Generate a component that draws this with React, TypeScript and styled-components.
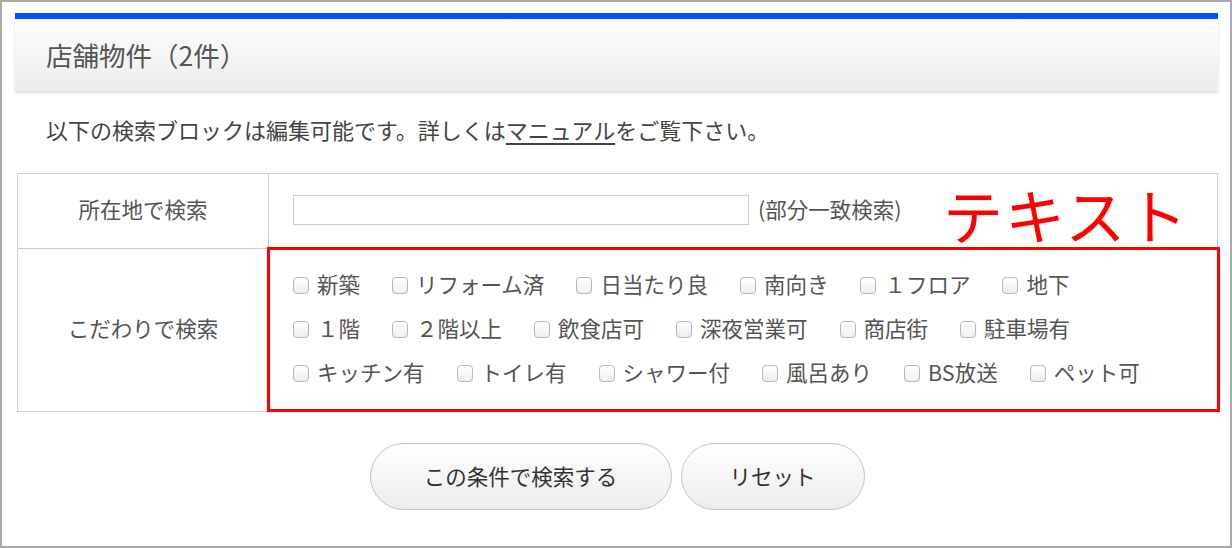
import React from "react";
import styled, { createGlobalStyle } from "styled-components";

const GlobalStyle = createGlobalStyle`
  * { box-sizing: border-box; }
  html, body { margin: 0; padding: 0; background: #fff; }
  body { font-family: "Noto Sans CJK JP", "Noto Sans", sans-serif; }
`;

const Frame = styled.div`
  width: 1232px;
  height: 548px;
  border: 2px solid #a9a9a9;
  padding: 11px 12px 0 13px;
  background: #fff;
  color: #555;
  overflow: hidden;
`;

const Header = styled.div`
  height: 78px;
  border-top: 6px solid #0052ff;
  background: linear-gradient(#fefefe, #ececec);
  box-shadow: 0 2px 3px rgba(0, 0, 0, 0.14);
  display: flex;
  align-items: center;
  padding-left: 31px;
  padding-bottom: 2px;
  font-size: 26.5px;
  color: #555;
`;

const Description = styled.p`
  margin: 23px 0 0;
  padding-left: 31px;
  font-size: 22px;
  line-height: 30px;
  color: #444;

  a {
    color: #444;
    text-decoration: underline;
    text-underline-offset: 4px;
  }
`;

const Table = styled.table`
  margin: 29px 0 0 2px;
  width: 1201px;
  border-collapse: collapse;
  font-size: 21.5px;
  color: #555;
`;

const Label = styled.th`
  width: 251px;
  border: 1px solid #cfcfcf;
  font-weight: normal;
  text-align: center;
  padding: 0 0 5px;
`;

const Cell = styled.td<{ $h: number }>`
  position: relative;
  height: ${(p) => p.$h}px;
  border: 1px solid #cfcfcf;
  padding: 0 0 0 24px;
  vertical-align: middle;
`;

const InputRow = styled.div`
  display: flex;
  align-items: center;
  padding-bottom: 3px;
`;

const TextInput = styled.input`
  width: 456px;
  height: 30px;
  border: 1px solid #ccc;
  margin: 0 9px 0 0;
  padding: 0 6px;
  font: inherit;
  font-size: 16px;
  outline: none;
`;

const Note = styled.span`
  font-size: 21.5px;
  color: #555;
  position: relative;
  top: -1px;
`;

const Annotation = styled.span`
  position: absolute;
  left: 674px;
  top: 10px;
  font-size: 60px;
  line-height: 1;
  color: #ff0000;
  letter-spacing: 2px;
`;

const Highlight = styled.div`
  position: absolute;
  top: -2px;
  left: -2px;
  right: -3px;
  bottom: -1px;
  border: 3.5px solid #ff0000;
  pointer-events: none;
`;

const Options = styled.div`
  padding: 13px 0 17px;
`;

const OptionRow = styled.div`
  height: 44px;
  display: flex;
  align-items: center;
`;

const Option = styled.label`
  display: inline-flex;
  align-items: center;
  margin-right: 32px;
  white-space: nowrap;
  line-height: 1;
`;

const Box = styled.span`
  width: 16px;
  height: 17px;
  border: 1px solid #b8b8b8;
  border-radius: 4px;
  background: linear-gradient(#ffffff, #eeeeee);
  margin-right: 8px;
  margin-top: 3px;
  flex: none;
`;

const Buttons = styled.div`
  margin-top: 31px;
  display: flex;
  justify-content: center;
  gap: 9px;
  padding-left: 1px;
`;

const Button = styled.button<{ $w: number }>`
  width: ${(p) => p.$w}px;
  height: 67px;
  border: 1px solid #c4c4c4;
  border-radius: 34px;
  background: linear-gradient(#ffffff, #ececec);
  font-family: inherit;
  font-size: 21.5px;
  color: #333;
  padding: 0 0 3px;
  box-shadow: inset 0 1px 0 #fff;
`;

const rows: string[][] = [
  ["新築", "リフォーム済", "日当たり良", "南向き", "１フロア", "地下"],
  ["１階", "２階以上", "飲食店可", "深夜営業可", "商店街", "駐車場有"],
  ["キッチン有", "トイレ有", "シャワー付", "風呂あり", "BS放送", "ペット可"],
];

export default function App() {
  return (
    <>
      <GlobalStyle />
      <Frame>
        <Header>店舗物件（2件）</Header>
        <Description>
          以下の検索ブロックは編集可能です。詳しくは<a href="#">マニュアル</a>をご覧下さい。
        </Description>
        <Table>
          <tbody>
            <tr>
              <Label>所在地で検索</Label>
              <Cell $h={75}>
                <InputRow>
                  <TextInput type="text" />
                  <Note>(部分一致検索)</Note>
                </InputRow>
                <Annotation>テキスト</Annotation>
              </Cell>
            </tr>
            <tr>
              <Label>こだわりで検索</Label>
              <Cell $h={163}>
                <Options>
                  {rows.map((r, i) => (
                    <OptionRow key={i}>
                      {r.map((t) => (
                        <Option key={t}>
                          <Box />
                          {t}
                        </Option>
                      ))}
                    </OptionRow>
                  ))}
                </Options>
                <Highlight />
              </Cell>
            </tr>
          </tbody>
        </Table>
        <Buttons>
          <Button $w={302}>この条件で検索する</Button>
          <Button $w={184}>リセット</Button>
        </Buttons>
      </Frame>
    </>
  );
}
